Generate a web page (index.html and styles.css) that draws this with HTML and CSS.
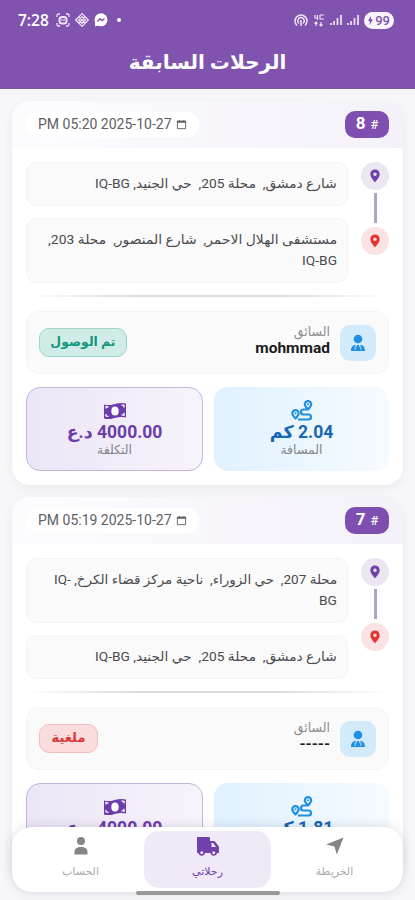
FILE: index.html
```html
<!DOCTYPE html>
<html lang="ar" dir="rtl">
<head>
<meta charset="utf-8">
<meta name="viewport" content="width=device-width, initial-scale=1">
<title>الرحلات السابقة</title>
<link rel="stylesheet" href="styles.css">
</head>
<body>
<svg width="0" height="0" class="defs" aria-hidden="true">
  <symbol id="pin" viewBox="0 0 24 24"><path fill="currentColor" fill-rule="evenodd" d="M12 1C7.3 1 4 4.500 4 9c0 5.500 5.500 10.500 8 14 2.500-3.500 8-8.500 8-14 0-4.500-3.300-8-8-8zm0 5a3 3 0 1 1 0 6 3 3 0 0 1 0-6z"/></symbol>
  <symbol id="cal" viewBox="0 0 12 12"><path d="M1.500 2.500h9v8h-9z" fill="none" stroke="currentColor"/><path d="M1 2h10v2H1zM3 1h1v2H3zM8 1h1v2H8z" fill="currentColor"/></symbol>
  <symbol id="driver" viewBox="0 0 16 18"><circle cx="8" cy="5" r="4.300" fill="currentColor"/><path fill="currentColor" d="M1 17c0-4 2-6 4.500-6L8 16l2.500-5c2.500 0 4.500 2 4.500 6z"/><path fill="currentColor" d="M7 11h2l.8 5H6.200z"/><path d="M5.200 12v4M10.800 12v4" stroke="#d3eafb" stroke-width=".8"/></symbol>
  <symbol id="route" viewBox="0 0 22 21"><g fill="none" stroke="currentColor" stroke-width="2.200" stroke-linejoin="round"><path d="M17 9.500c-2-2.200-3.200-3.600-3.200-5.200a3.200 3.200 0 0 1 6.400 0c0 1.600-1.200 3-3.200 5.200z"/><path d="M4.500 18.500c-2-2.200-3.200-3.600-3.200-5.200a3.200 3.200 0 0 1 6.400 0c0 1.600-1.200 3-3.200 5.200z"/><path d="M16 9.500h-3.500a2.500 2.500 0 0 0 0 5h5a2.400 2.400 0 0 1 0 5H7"/></g><circle cx="17" cy="4.200" r="1" fill="currentColor"/><circle cx="4.500" cy="13.200" r="1" fill="currentColor"/></symbol>
  <symbol id="cash" viewBox="0 0 24 18"><path fill="currentColor" d="M1 2.500c7 2.500 14-3.500 22-1v14c-8-2.500-15 3.500-22 1z"/><ellipse cx="12" cy="9" rx="3.700" ry="4.500" fill="#fff"/><path d="M3 6.500V4.700c1 .3 2 .3 2.500.2M18.500 3.200c1-.1 2 0 2.500.2v2M3 12v2c1 .3 2 .3 2.500.2M18.500 13c1-.1 2 0 2.500.2v-2.500" fill="none" stroke="#fff" stroke-width="1.300"/></symbol>
</svg>

<header class="top">
  <div class="status" dir="ltr">
    <div class="status-side">
      <span class="clock">7:28</span>
      <svg width="14" height="14" viewBox="0 0 14 14" class="soft"><path d="M1 4V2.500Q1 1 2.500 1H4M10 1h1.500Q13 1 13 2.500V4M13 10v1.500q0 1.500-1.500 1.500H10M4 13H2.500Q1 13 1 11.500V10" fill="none" stroke="#fff" stroke-width="1.300"/><rect x="3.500" y="4" width="7" height="6.500" rx="2.500" fill="none" stroke="#fff" stroke-width="2"/><path d="M5 7h4" stroke="#fff"/></svg>
      <svg width="14" height="14" viewBox="0 0 14 14" class="soft"><path d="M7 .7 13.300 7 7 13.300.7 7zM7 3.500 10.500 7 7 10.500 3.500 7zM3.500 3.500l7 7M10.500 3.500l-7 7" fill="none" stroke="#fff" stroke-width="1.200"/></svg>
      <svg width="14" height="14" viewBox="0 0 14 14"><circle cx="7" cy="6.800" r="6.500" fill="#fff"/><path d="M1 9v4.500L5 12z" fill="#fff"/><path d="M3.500 8.500 6 5.800l2 1.700 2.500-2" fill="none" stroke="#8053ae" stroke-width="1.400"/></svg>
      <i class="dot"></i>
    </div>
    <div class="status-side right">
      <svg width="14" height="13" viewBox="0 0 14 13" class="soft"><path d="M3 11.500A6 6 0 1 1 11 11.500M5 9.500a3.300 3.300 0 1 1 4 0M7 6v6" fill="none" stroke="#fff" stroke-width="1.500"/></svg>
      <svg width="12" height="13" viewBox="0 0 12 13" class="soft"><path d="M2 1v3h3M4.500 1v5M7 1v4h4M7 1h4M3 12V8M1.500 9.500 3 8l1.500 1.500M8 8v4M6.500 10.500 8 12l1.500-1.500" fill="none" stroke="#fff" stroke-width="1.200"/></svg>
      <svg width="12" height="12" viewBox="0 0 12 12" class="soft"><path d="M1 11V9M4 11V7M7.500 11V4M11 11V1" stroke="#fff" stroke-width="1.700"/></svg>
      <svg width="12" height="12" viewBox="0 0 12 12" class="soft"><path d="M1 11V9M4 11V7M7.500 11V4M11 11V1" stroke="#fff" stroke-width="1.700"/></svg>
      <span class="battery"><svg width="5" height="9" viewBox="0 0 5 9"><path d="M3 0 0 5h2l-.5 4L5 3.500H3z" fill="#8053ae"/></svg>99</span>
    </div>
  </div>
  <h1><span class="fit">الرحلات السابقة</span></h1>
</header>

<main>
  <article class="card">
    <div class="card-head">
      <div class="num"><span>#</span><b>8</b></div>
      <div class="date" dir="ltr"><span>PM 05:20 2025-10-27</span><svg width="11" height="11"><use href="#cal"/></svg></div>
    </div>
    <div class="card-body">
      <div class="route">
        <div class="rail"><span class="stop from"><svg width="16" height="14"><use href="#pin"/></svg></span><i></i><span class="stop to"><svg width="16" height="14"><use href="#pin"/></svg></span></div>
        <div class="places">
          <p><span class="fit w1">شارع دمشق,&nbsp; محلة 205,&nbsp; حي الجنيد, IQ-BG</span></p>
          <p><span class="fit w2">مستشفى الهلال الاحمر,&nbsp; شارع المنصور,&nbsp; محلة 203,</span><span class="fit w4">IQ-BG</span></p>
        </div>
      </div>
      <hr>
      <div class="person">
        <span class="avatar"><svg width="16" height="18"><use href="#driver"/></svg></span>
        <div class="who"><small>السائق</small><strong>mohmmad</strong></div>
        <span class="state done"><span class="fit">تم الوصول</span></span>
      </div>
      <div class="stats">
        <div class="stat dist"><svg width="22" height="21"><use href="#route"/></svg><strong>2.04 كم</strong><small>المسافة</small></div>
        <div class="stat cost"><svg width="24" height="18"><use href="#cash"/></svg><strong>4000.00 د.ع</strong><small>التكلفة</small></div>
      </div>
    </div>
  </article>

  <article class="card">
    <div class="card-head">
      <div class="num"><span>#</span><b>7</b></div>
      <div class="date" dir="ltr"><span>PM 05:19 2025-10-27</span><svg width="11" height="11"><use href="#cal"/></svg></div>
    </div>
    <div class="card-body">
      <div class="route">
        <div class="rail"><span class="stop from"><svg width="16" height="14"><use href="#pin"/></svg></span><i></i><span class="stop to"><svg width="16" height="14"><use href="#pin"/></svg></span></div>
        <div class="places">
          <p><span class="fit w3">محلة 207,&nbsp; حي الزوراء,&nbsp; ناحية مركز قضاء الكرخ, <bdi dir="ltr">IQ-</bdi></span><span class="fit w4">BG</span></p>
          <p><span class="fit w1">شارع دمشق,&nbsp; محلة 205,&nbsp; حي الجنيد, IQ-BG</span></p>
        </div>
      </div>
      <hr>
      <div class="person">
        <span class="avatar"><svg width="16" height="18"><use href="#driver"/></svg></span>
        <div class="who"><small>السائق</small><strong class="dash">-----</strong></div>
        <span class="state cancel"><span class="fit">ملغية</span></span>
      </div>
      <div class="stats">
        <div class="stat dist"><svg width="22" height="21"><use href="#route"/></svg><strong>1.81 كم</strong><small>المسافة</small></div>
        <div class="stat cost"><svg width="24" height="18"><use href="#cash"/></svg><strong>4000.00 د.ع</strong><small>التكلفة</small></div>
      </div>
    </div>
  </article>
</main>

<nav class="tabs">
  <a class="tab"><svg width="20" height="20" viewBox="0 0 20 20"><path d="M18.500 1.500 1 8.500l8.500 2 2.300 8z" fill="#858585"/></svg><span>الخريطة</span></a>
  <a class="tab active"><svg width="24" height="22" viewBox="0 0 24 22"><path fill="#7040ab" fill-rule="evenodd" d="M1 2Q1 1 2 1h11q1 0 1 1v3h3.500q1 0 1.600.8L22.500 10q.5.700.5 1.500V17h-2a3.300 3.300 0 0 1-6.500 0H9a3.300 3.300 0 0 1-6.500 0H1zm14.500 5v4H20l-2.800-4zM5.700 15.300a1.500 1.500 0 1 0 .1 0zm12 0a1.500 1.500 0 1 0 .1 0z"/></svg><span>رحلاتي</span></a>
  <a class="tab"><svg width="16" height="20" viewBox="0 0 16 20"><circle cx="8" cy="5" r="4" fill="#858585"/><path d="M1.500 18.500v-2.500c0-3.500 2.500-5 6.500-5s6.500 1.500 6.500 5v2.500z" fill="#858585"/></svg><span>الحساب</span></a>
</nav>
<div class="homebar"></div>
</body>
</html>
```
FILE: styles.css
```css
* { box-sizing: border-box; }
html, body { height: 100%; overflow: hidden; }
body {
  margin: 0;
  background: #f7f7f9;
  color: #4b4b4f;
  font-family: Roboto, "DejaVu Sans", sans-serif;
  font-size: 13px;
}
.defs { position: absolute; }
svg { display: block; flex: none; }
h1, p { margin: 0; }
.fit { display: block; width: max-content; white-space: nowrap; transform-origin: right center; }
.w1 { transform: scaleX(1.057); }
.w2 { transform: scaleX(1.070); }
.w3 { transform: scaleX(1.040); }
.w4 { transform: scaleX(1.060); }

.top { height: 89px; background: #8053ae; color: #fff; }
.status { display: flex; justify-content: space-between; align-items: center; height: 40px; padding: 0 21px 0 18px; }
.status-side { display: flex; align-items: center; gap: 5px; }
.clock { font: 600 15.500px/18px "Open Sans", sans-serif; margin-right: 2px; }
.dot { width: 4px; height: 4px; border-radius: 50%; background: #fff; margin-left: 4px; }
.soft { opacity: .85; }
.battery { display: flex; align-items: center; gap: 2px; height: 17px; padding: 0 4px; border-radius: 9px; background: #f7f2fb; color: #8053ae; font-size: 13px; font-weight: 500; }
h1 { display: flex; justify-content: center; font-size: 20px; line-height: 44px; }
h1 .fit { transform-origin: center; }

main { display: flex; flex-direction: column; gap: 12px; padding: 12px 12px 0; }
.card { height: 384px; flex: none; border-radius: 18px; background: #fff; box-shadow: 0 3px 10px rgba(70, 60, 100, .07); overflow: hidden; }
.card-head { display: flex; justify-content: space-between; align-items: center; height: 47px; padding: 0 14px; background: linear-gradient(to left, #f4f1f9, #fcfbfe 90%); }
.num { display: flex; align-items: center; justify-content: center; gap: 5px; width: 44px; height: 27px; border-radius: 10px; background: #7e4fb1; color: #fff; font-size: 13px; }
.num span { font-weight: 500; }
.num b { font-size: 17px; margin-top: -4px; }
.date { display: flex; align-items: center; justify-content: space-between; width: 173px; height: 25px; padding: 0 12px; border-radius: 12px; background: #fff; color: #606064; font-size: 14px; line-height: 22px; white-space: nowrap; }
.date span { margin-top: -2px; }
.card-body { padding: 14px; }

.route { display: flex; gap: 13px; height: 121px; }
.rail { display: flex; flex-direction: column; align-items: center; width: 28px; }
.rail i { width: 3px; height: 30px; margin: 3px 0 4px; background: #b0a3c4; }
.stop { display: grid; place-items: center; width: 28px; height: 28px; border-radius: 50%; }
.from { background: #eae6f2; color: #7040ab; }
.to { background: #fbe3e4; color: #e53430; }
.places { display: flex; flex-direction: column; gap: 12px; flex: 1; }
.places p { padding: 10px 10px 11px; border: 1px solid #f4f4f5; border-radius: 10px; background: #fafafa; line-height: 21px; }
hr { height: 2px; margin: 12px 0 14px; border: 0; background: linear-gradient(to right, transparent, #dcdcde 30%, #dcdcde 70%, transparent); }

.person { display: flex; align-items: center; height: 63px; padding: 0 12px; border: 1px solid #f4f4f5; border-radius: 13px; background: #fafafa; }
.avatar { display: grid; place-items: center; width: 36px; height: 36px; border-radius: 10px; background: #d3eafb; color: #1e8fe1; }
.who { display: flex; flex-direction: column; flex: 1; margin-right: 10px; margin-top: -4px; }
.who small { color: #8d8d90; font-size: 12.500px; line-height: 16px; }
.who strong { color: #1b1b1d; font-size: 15.500px; line-height: 17px; }
.state { display: flex; align-items: center; justify-content: center; height: 29px; border: 1px solid; border-radius: 10px; font-weight: bold; line-height: 20px; padding-bottom: 2px; }
.state .fit { transform-origin: center; }
.done { width: 88px; background: #d0ece6; border-color: #9cd5ca; color: #17977f; }
.done .fit { transform: scaleX(.96); }
.cancel { width: 59px; background: #fbdcdc; border-color: #f3bcbc; color: #d93a38; }

.stats { display: flex; gap: 11px; margin-top: 13px; }
.stat { display: flex; flex-direction: column; align-items: center; flex: 1; height: 84px; padding-top: 13px; border-radius: 14px; }
.stat strong { font-size: 17.500px; line-height: 23px; }
.stat small { color: #85858c; font-size: 12.500px; line-height: 11px; }
.dist { background: linear-gradient(to left, #f6fbff, #e0f1fe); color: #1e8fe1; }
.dist strong { color: #1767b4; }
.cost { border: 1px solid #c2b3da; background: linear-gradient(to left, #f7f4fb, #ece5f6); color: #6c3cac; }
.cost svg { margin: 1px 0; }

.tabs { position: absolute; left: 12px; right: 12px; top: 827px; display: flex; height: 65px; padding: 4px 5px; border-radius: 20px; background: #fff; box-shadow: 0 0 12px rgba(50, 40, 70, .16); }
.tab { display: flex; flex-direction: column; align-items: center; justify-content: space-between; flex: 1; padding: 5px 0 6px; border-radius: 15px; color: #aaa; font-size: 11px; line-height: 20px; }
.active { background: #f0e9f7; color: #7040ab; font-weight: 500; }
.homebar { position: absolute; left: 136px; top: 891px; width: 144px; height: 4px; border-radius: 2px; background: #999; }
```
